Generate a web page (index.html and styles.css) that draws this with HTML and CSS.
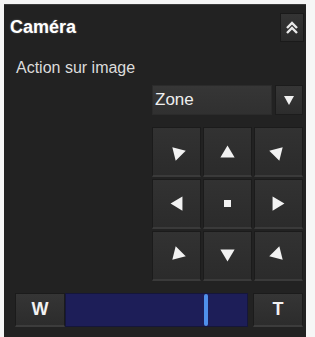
FILE: index.html
```html
<!DOCTYPE html>
<html lang="fr">
<head>
  <meta charset="UTF-8">
  <title>Caméra</title>
  <link rel="stylesheet" href="styles.css">
</head>
<body>
  <div class="panel">
    <!-- Header -->
    <div class="header">
      <div class="title">Caméra</div>
      <div class="collapse">
        <svg width="14" height="14" viewBox="0 0 14 14">
          <polyline points="2,7 7,2 12,7" fill="none" stroke="#e8e8e8" stroke-width="2.4"/>
          <polyline points="2,12 7,7 12,12" fill="none" stroke="#e8e8e8" stroke-width="2.4"/>
        </svg>
      </div>
    </div>

    <div class="label">Action sur image</div>

    <!-- Mode select -->
    <div class="select-row">
      <div class="select">Zone</div>
      <div class="select-btn">
        <svg width="12" height="12" viewBox="0 0 12 12"><polygon points="1,2 11,2 6,11" fill="#f0f0f0"/></svg>
      </div>
    </div>

    <!-- Direction pad -->
    <div class="pad">
      <div class="pad-btn"><svg class="arrow ul" viewBox="0 0 16 16"><polygon points="13,8 3,2 3,14" /></svg></div>
      <div class="pad-btn"><svg class="arrow up" viewBox="0 0 16 16"><polygon points="13,8 3,2 3,14" /></svg></div>
      <div class="pad-btn"><svg class="arrow ur" viewBox="0 0 16 16"><polygon points="13,8 3,2 3,14" /></svg></div>
      <div class="pad-btn"><svg class="arrow left" viewBox="0 0 16 16"><polygon points="13,8 3,2 3,14" /></svg></div>
      <div class="pad-btn"><div class="stop"></div></div>
      <div class="pad-btn"><svg class="arrow right" viewBox="0 0 16 16"><polygon points="13,8 3,2 3,14" /></svg></div>
      <div class="pad-btn"><svg class="arrow dl" viewBox="0 0 16 16"><polygon points="13,8 3,2 3,14" /></svg></div>
      <div class="pad-btn"><svg class="arrow down" viewBox="0 0 16 16"><polygon points="13,8 3,2 3,14" /></svg></div>
      <div class="pad-btn"><svg class="arrow dr" viewBox="0 0 16 16"><polygon points="13,8 3,2 3,14" /></svg></div>
    </div>

    <!-- Zoom bar -->
    <div class="zoom-row">
      <div class="zoom-btn">W</div>
      <div class="zoom-bar">
        <div class="zoom-knob" style="left: 76%"></div>
      </div>
      <div class="zoom-btn t">T</div>
    </div>
  </div>
</body>
</html>
```

FILE: styles.css
```css
body {
  margin: 0;
  background-color: #f6f6f6;
  font-family: "Liberation Sans", Arial, sans-serif;
  height: 337px;
  overflow: hidden;
}

/* Main dark panel */
.panel {
  margin: 4px 0 0 4px;
  width: 302px;
  height: 340px;
  box-sizing: border-box;
  padding: 0 3px 0 6px;
  background-color: #222222;
  border-top: 1px solid #3c3c3c;
  display: flex;
  flex-direction: column;
}

/* Header */
.header {
  display: flex;
  justify-content: space-between;
  align-items: center;
  margin-top: 8px;
  height: 29px;
}

.title {
  color: #ffffff;
  font-size: 18px;
  font-weight: bold;
  text-shadow: 0 0 2px rgba(255, 255, 255, 0.35);
}

.collapse {
  width: 24px;
  height: 29px;
  display: flex;
  justify-content: center;
  align-items: center;
  background: linear-gradient(#343434, #2a2a2a);
  border: 1px solid #1a1a1a;
  box-sizing: border-box;
  margin-right: -1px;
}

/* Label */
.label {
  color: #dcdcdc;
  font-size: 16px;
  line-height: 18px;
  margin: 17px 0 0 6px;
}

/* Select */
.select-row {
  display: flex;
  gap: 3px;
  margin: 8px 0 0 auto;
  width: 151px;
  height: 30px;
}

.select {
  flex: 1;
  background: linear-gradient(#363636, #303030);
  border: 1px solid #2b2b2b;
  color: #eeeeee;
  font-size: 17px;
  line-height: 28px;
  padding-left: 2px;
}

.select-btn {
  width: 28px;
  display: flex;
  justify-content: center;
  align-items: center;
  background: linear-gradient(#363636, #2c2c2c);
  border: 1px solid #1c1c1c;
  box-sizing: border-box;
}

/* Direction pad */
.pad {
  display: grid;
  grid-template-columns: repeat(3, 49px);
  grid-template-rows: repeat(3, 50px);
  gap: 2px;
  margin: 12px 0 0 auto;
  width: 151px;
}

.pad-btn {
  display: flex;
  justify-content: center;
  align-items: center;
  background: linear-gradient(#323232, #2b2b2b);
  border: 1px solid #1b1b1b;
  border-bottom: 2px solid #3a3a3a;
  box-sizing: border-box;
}

.arrow {
  width: 19px;
  height: 19px;
  fill: #f2f2f2;
}

.arrow.up { transform: rotate(-90deg); }
.arrow.down { transform: rotate(90deg); }
.arrow.left { transform: rotate(180deg); }
.arrow.ul { transform: rotate(-135deg); }
.arrow.ur { transform: rotate(-45deg); }
.arrow.dl { transform: rotate(135deg); }
.arrow.dr { transform: rotate(45deg); }

.stop {
  width: 7px;
  height: 7px;
  background-color: #f2f2f2;
}

/* Zoom bar */
.zoom-row {
  display: flex;
  align-items: stretch;
  margin: 12px 0 0 5px;
  height: 34px;
}

.zoom-btn {
  width: 50px;
  display: flex;
  justify-content: center;
  align-items: center;
  color: #f2f2f2;
  font-size: 18px;
  font-weight: bold;
  background: linear-gradient(#353535, #2c2c2c);
  border: 1px solid #1b1b1b;
  border-bottom: 2px solid #3c3c3c;
  box-sizing: border-box;
}

.zoom-btn.t {
  margin-left: 5px;
}

.zoom-bar {
  flex: 1;
  position: relative;
  background-color: #1d1e58;
  border: 1px solid #15163a;
}

.zoom-knob {
  position: absolute;
  top: 0;
  bottom: 0;
  width: 4px;
  border-radius: 2px;
  background-color: #4f90ea;
}
```
